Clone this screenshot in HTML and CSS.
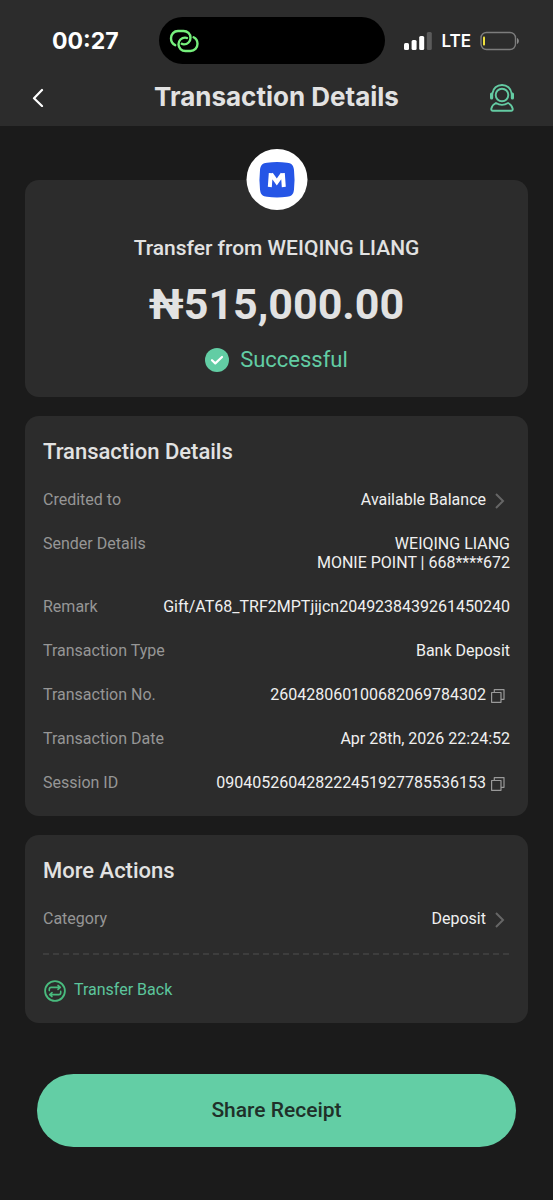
FILE: index.html
```html
<!DOCTYPE html>
<html lang="en">
<head>
<meta charset="utf-8">
<meta name="viewport" content="width=device-width, initial-scale=1">
<title>Transaction Details</title>
<link rel="stylesheet" href="styles.css">
</head>
<body>
<header class="top">
  <div class="status">
    <time class="clock">00:27</time>
    <div class="island">
      <svg class="link-icon" viewBox="0 0 30 24" width="30" height="24" fill="none" stroke="#76ef7c" stroke-width="2.4" stroke-linecap="round">
        <path d="M6.200 16.200C3.600 15 2 12.500 2 9.300C2 5.200 5 2 9 2H14.500C18.500 2 21.500 5 21.500 8.700C21.500 12.500 18.500 15.400 15 15.400C13.900 15.400 13.300 15.200 12.700 14.800"/>
        <path d="M24.600 8.200C27 9.400 28.500 11.900 28.500 14.700C28.500 18.800 25.500 22 21.500 22H16.500C12.500 22 9.500 19 9.500 15.300C9.500 11.500 12.500 8.600 16 8.600C17 8.600 17.500 8.700 18 9"/>
      </svg>
    </div>
    <div class="signals">
      <svg viewBox="0 0 28 18" width="28" height="18">
        <rect x="0" y="11" width="5" height="7" rx="1.500" fill="#fff"/>
        <rect x="7.600" y="8" width="5" height="10" rx="1.500" fill="#fff"/>
        <rect x="15.200" y="4" width="5" height="14" rx="1.500" fill="#fff"/>
        <rect x="22.800" y="0" width="5" height="18" rx="1.500" fill="#5b5b5b"/>
      </svg>
      <span class="network">LTE</span>
      <svg viewBox="0 0 40 20" width="40" height="20">
        <rect x="1" y="1.500" width="34.500" height="17" rx="5.500" fill="none" stroke="#7c7c7c" stroke-width="1.400"/>
        <rect x="3" y="5.500" width="2" height="9" rx=".8" fill="#efe03c"/>
        <path d="M37 7C39.400 8 39.400 12 37 13Z" fill="#8a8a8a"/>
      </svg>
    </div>
  </div>
  <nav class="nav">
    <button class="icon-button" aria-label="Back">
      <svg viewBox="0 0 12 20" width="12" height="20" fill="none" stroke="#fff" stroke-width="2.200" stroke-linecap="round" stroke-linejoin="round"><path d="M10 3L2 11.300L10 19"/></svg>
    </button>
    <h1 class="nav-title">Transaction Details</h1>
    <button class="icon-button icon-button-end" aria-label="Customer support">
      <svg viewBox="0 0 26 30" width="26" height="30" fill="none" stroke="#64cba3" stroke-width="1.900" stroke-linecap="round" stroke-linejoin="round">
        <circle cx="13" cy="13" r="6.300"/>
        <path d="M3.400 11.500C4 6.300 8 3 13 3C18 3 22 6.300 22.600 11.500"/>
        <path d="M2.600 12V16M23.400 12V16" stroke-width="3.200"/>
        <path d="M6.900 21C4.600 22.100 2.900 24.300 2.300 26.800C2.100 28 2.600 28.700 3.800 28.700H22.200C23.400 28.700 23.900 28 23.700 26.800C23.100 24.300 21.400 22.100 19.100 21C15.500 23.200 10.500 23.200 6.900 21Z"/>
      </svg>
    </button>
  </nav>
</header>
<main class="content">
  <section class="card summary">
    <div class="bank-logo">
      <svg viewBox="0 0 61 61" width="61" height="61" role="img" aria-label="Moniepoint">
        <path d="M13.500 21C14 15.500 16.500 14.200 20.500 13.700Q30.500 12.400 40.500 13.700C44.500 14.200 47 15.500 47.500 21Q48.600 31 47.500 40.500C47 46 44.500 47.300 40.500 47.800Q30.500 49.200 20.500 47.800C16.500 47.300 14 46 13.500 40.500Q12.400 31 13.500 21Z" fill="#2555e6"/>
        <path d="M23.300 38L24.300 24.200M37.300 38L36.300 24.200M24.600 25L30.300 33L36 25" fill="none" stroke="#fff" stroke-width="4"/>
      </svg>
    </div>
    <p class="sender">Transfer from WEIQING LIANG</p>
    <p class="amount">₦515,000.00</p>
    <p class="state">
      <svg viewBox="0 0 24 24" width="24" height="24"><circle cx="12" cy="12" r="12" fill="#62cda4"/><path d="M7 12.200L10.300 15.400L17 9" fill="none" stroke="#fff" stroke-width="2.200" stroke-linecap="round" stroke-linejoin="round"/></svg>
      Successful
    </p>
  </section>

  <section class="card panel">
    <h2 class="panel-title">Transaction Details</h2>
    <dl class="rows">
      <div class="row"><dt class="label">Credited to</dt><dd class="value"><button class="value-button">Available Balance
        <svg class="chevron" viewBox="0 0 24 19" width="24" height="19" fill="none" stroke="#666" stroke-width="2"><path d="M10 4L17 11L10 18"/></svg></button></dd></div>
      <div class="row"><dt class="label">Sender Details</dt><dd class="value">WEIQING LIANG<br>MONIE POINT | 668****672</dd></div>
      <div class="row"><dt class="label">Remark</dt><dd class="value">Gift/AT68_TRF2MPTjijcn2049238439261450240</dd></div>
      <div class="row"><dt class="label">Transaction Type</dt><dd class="value">Bank Deposit</dd></div>
      <div class="row"><dt class="label">Transaction No.</dt><dd class="value"><button class="value-button" aria-label="Copy transaction number">260428060100682069784302
        <svg viewBox="0 0 24 19" width="24" height="19" fill="none" stroke="#999" stroke-width="1.200" stroke-linejoin="round"><path d="M5.600 7.500H15V17.300H5.600ZM8.300 7.500V4.700H18V14.300H15"/></svg></button></dd></div>
      <div class="row"><dt class="label">Transaction Date</dt><dd class="value">Apr 28th, 2026 22:24:52</dd></div>
      <div class="row"><dt class="label">Session ID</dt><dd class="value"><button class="value-button" aria-label="Copy session ID">090405260428222451927785536153
        <svg viewBox="0 0 24 19" width="24" height="19" fill="none" stroke="#999" stroke-width="1.200" stroke-linejoin="round"><path d="M5.600 7.500H15V17.300H5.600ZM8.300 7.500V4.700H18V14.300H15"/></svg></button></dd></div>
    </dl>
  </section>

  <section class="card panel">
    <h2 class="panel-title">More Actions</h2>
    <dl class="rows">
      <div class="row"><dt class="label">Category</dt><dd class="value"><button class="value-button">Deposit
        <svg class="chevron" viewBox="0 0 24 19" width="24" height="19" fill="none" stroke="#666" stroke-width="2"><path d="M10 4L17 11L10 18"/></svg></button></dd></div>
    </dl>
    <div class="divider"></div>
    <button class="transfer-back">
      <svg viewBox="0 0 24 24" width="24" height="24" fill="none" stroke="#49bb7e" stroke-width="1.600" stroke-linecap="round" stroke-linejoin="round">
        <circle cx="12" cy="13" r="9.900" stroke-width="1.800"/>
        <path d="M6.300 12.600V11.200Q6.300 9.400 8.200 9.400H16.800M15 7.400L17.300 9.400L15 11.400M17.700 13.400V14.800Q17.700 16.600 15.800 16.600H7.200M9 14.600L6.700 16.600L9 18.600"/>
      </svg>
      Transfer Back
    </button>
  </section>

  <button class="share">Share Receipt</button>
</main>
</body>
</html>
```
FILE: styles.css
```css
* {
  box-sizing: border-box;
}

body {
  margin: 0;
  min-height: 100vh;
  background: #1b1b1b;
  color: #e2e2e2;
  font-family: Roboto, "Noto Sans", sans-serif;
  font-size: 16px;
  line-height: 19px;
}

h1, h2, p, dl, dd {
  margin: 0;
}

button {
  padding: 0;
  border: 0;
  background: none;
  color: inherit;
  font: inherit;
  cursor: pointer;
}

svg {
  display: block;
  flex: none;
}

.top {
  padding-top: 17px;
  background: #2c2c2c;
}

.status {
  display: grid;
  grid-template-columns: 1fr 226px 1fr;
  align-items: center;
  margin-right: 10px;
}

.clock {
  padding-left: 12px;
  color: #fff;
  font: 700 23px/28px Inter, sans-serif;
  text-align: center;
}

.island {
  display: flex;
  align-items: center;
  height: 47px;
  padding-left: 10px;
  border-radius: 24px;
  background: #000;
}

.signals {
  display: flex;
  align-items: center;
  justify-content: flex-end;
  gap: 9px;
  padding-right: 23px;
}

.network {
  color: #fff;
  font: 600 17px/24px Inter, sans-serif;
}

.nav {
  display: grid;
  grid-template-columns: 1fr auto 1fr;
  align-items: center;
  padding: 16px 32px 12px;
}

.icon-button-end {
  justify-self: end;
  padding-right: 6px;
}

.nav-title {
  font: 700 26px/34px Inter, sans-serif;
}

.content {
  display: flex;
  flex-direction: column;
  gap: 19px;
  padding: 54px 25px;
}

.card {
  border-radius: 14px;
  background: #2c2c2c;
}

.summary {
  position: relative;
  display: flex;
  flex-direction: column;
  align-items: center;
  gap: 17px;
  padding: 55px 16px 24px;
}

.bank-logo {
  position: absolute;
  top: -31px;
  left: 50%;
  transform: translateX(-50%);
  border-radius: 50%;
  background: #fff;
}

.sender {
  font-size: 21px;
  font-weight: 500;
  line-height: 26px;
}

.amount {
  font-size: 43px;
  font-weight: 700;
  line-height: 52px;
}

.state {
  display: flex;
  align-items: center;
  gap: 11px;
  color: #62cda4;
  font-size: 22px;
  line-height: 26px;
}

.panel {
  padding: 24px 18px;
}

.panel-title {
  margin-bottom: 26px;
  font-size: 22px;
  font-weight: 500;
  line-height: 24px;
}

.rows {
  display: grid;
  gap: 25px;
}

.row {
  display: flex;
  justify-content: space-between;
  gap: 16px;
}

.label {
  color: #969696;
}

.value {
  color: #f0f0f0;
  text-align: right;
}

.value-button {
  display: flex;
}

.divider {
  height: 2px;
  margin: 25px 0;
  background: repeating-linear-gradient(90deg, #3d3d3d 0 6px, transparent 6px 10px);
}

.transfer-back {
  display: flex;
  align-items: center;
  gap: 7px;
  height: 19px;
  color: #5cc59c;
}

.share {
  height: 73px;
  margin: 32px 12px 0;
  border-radius: 37px;
  background: #63cea5;
  color: #1f3029;
  font-size: 21px;
  font-weight: 500;
}
```
